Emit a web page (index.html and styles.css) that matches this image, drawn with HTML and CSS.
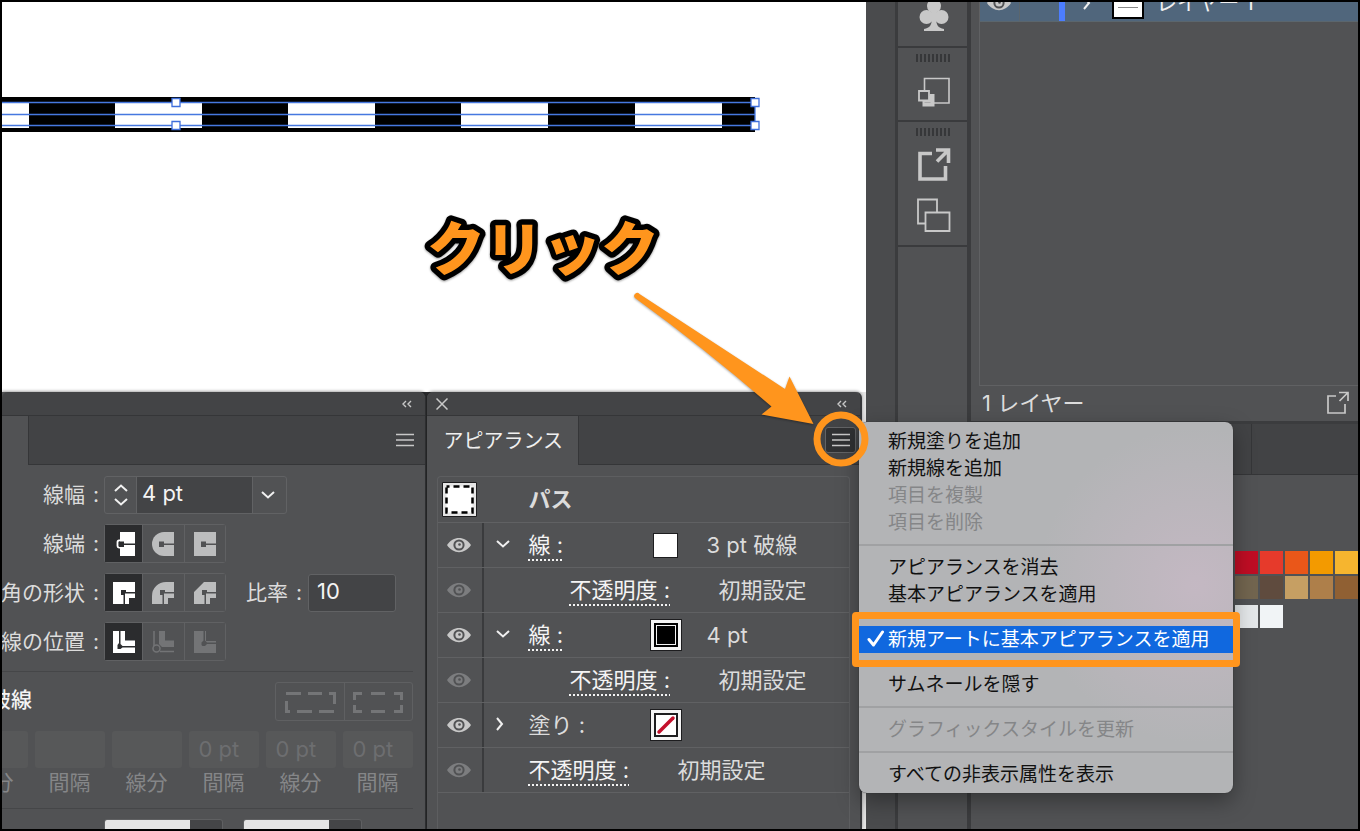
FILE: index.html
```html
<!DOCTYPE html>
<html lang="ja">
<head>
<meta charset="utf-8">
<title>アピアランス</title>
<link rel="stylesheet" href="styles.css">
</head>
<body>
<svg class="defs" aria-hidden="true">
  <symbol id="eye" viewBox="0 0 24 16"><path d="M0 8C6-1.500 18-1.500 24 8C18 17.500 6 17.500 0 8Z" fill="currentColor"/><circle cx="12" cy="8" r="5.600" fill="#515254"/><circle cx="12" cy="8" r="3.600" fill="currentColor"/><circle cx="12.500" cy="7.500" r="1.300" fill="#515254"/></symbol>
  <symbol id="down" viewBox="0 0 14 8"><path d="M1 1L7 6.500L13 1" fill="none" stroke="currentColor" stroke-width="2"/></symbol>
  <symbol id="up" viewBox="0 0 14 8"><path d="M1 7L7 1.500L13 7" fill="none" stroke="currentColor" stroke-width="2"/></symbol>
  <symbol id="right" viewBox="0 0 8 14"><path d="M1 1L6 7L1 13" fill="none" stroke="currentColor" stroke-width="2"/></symbol>
  <symbol id="collapse" viewBox="0 0 12 8"><path d="M5 1L2 4L5 7M10 1L7 4L10 7" fill="none" stroke="currentColor" stroke-width="1.400"/></symbol>
  <symbol id="burger" viewBox="0 0 20 14"><path d="M1 1.500H19M1 7H19M1 12.500H19" stroke="currentColor" stroke-width="1.600"/></symbol>
  <symbol id="export" viewBox="0 0 34 34"><path d="M15 5.500H3V31H28.500V18" fill="none" stroke="currentColor" stroke-width="3.600"/><path d="M19 2H31.500V15M31 2.500L20 13.500" fill="none" stroke="currentColor" stroke-width="3.600"/></symbol>
</svg>
<div class="frame">
  <main class="workspace">
    <section class="artboard">
      <svg class="artwork" viewBox="2 90 762 50" width="762" height="50" aria-label="破線パス">
        <rect x="2" y="97" width="753" height="35"/>
        <path fill="#fff" d="M2 102H29V128H2ZM115 102H202V128H115ZM288 102H375V128H288ZM461 102H548V128H461ZM635 102H722V128H635Z"/>
        <path d="M2 102.500H755M2 114.500H755M2 125.500H755M755 102V126" fill="none" stroke="#4678e0" stroke-width="1.300"/>
        <path d="M172 98.500h8v8h-8ZM172 121.500h8v8h-8ZM751 98.500h8v8h-8ZM751 121.500h8v8h-8Z" fill="#fff" stroke="#3f6fdc" stroke-width="1.300"/>
      </svg>
    </section>
    <div class="panels">
      <section class="panel stroke-panel">
        <header class="panel-bar"><button class="icon-button collapse" aria-label="折りたたむ"><svg width="12" height="8"><use href="#collapse"/></svg></button></header>
        <div class="tabs">
          <span class="tab tab-edge"></span>
          <button class="icon-button menu-button" aria-label="線メニュー"><svg width="20" height="14"><use href="#burger"/></svg></button>
        </div>
        <div class="stroke-body">
          <div class="field-row">
            <label class="field-label" for="weight">線幅<span>:</span></label>
            <div class="combo">
              <div class="stepper">
                <button class="icon-button" aria-label="増やす"><svg width="14" height="8"><use href="#up"/></svg></button>
                <button class="icon-button" aria-label="減らす"><svg width="14" height="8"><use href="#down"/></svg></button>
              </div>
              <input id="weight" class="text-input" value="4 pt">
              <button class="icon-button combo-open" aria-label="線幅の候補"><svg width="14" height="8"><use href="#down"/></svg></button>
            </div>
          </div>
          <div class="field-row">
            <span class="field-label">線端<span>:</span></span>
            <div class="segment" role="group" aria-label="線端">
              <button class="seg on" aria-label="線端なし"><svg width="22" height="24" viewBox="0 0 22 24"><path d="M7 0H22V24H7Z" fill="currentColor"/><path d="M9 8.500H6Q4.500 8.500 4.500 10V14Q4.500 15.500 6 15.500H9" fill="none" stroke="currentColor" stroke-width="1.800"/><path d="M6 9.500h5v2h11v1.500h-11v2h-5Z" class="cut"/></svg></button>
              <button class="seg" aria-label="丸型線端"><svg width="22" height="24" viewBox="0 0 22 24"><path d="M22 0H12A12 12 0 0 0 12 24H22Z" fill="currentColor"/><path d="M7 9.500h5v2h10v1.500h-10v2h-5Z" class="cut"/></svg></button>
              <button class="seg" aria-label="突出線端"><svg width="22" height="24" viewBox="0 0 22 24"><path d="M0 0H22V24H0Z" fill="currentColor"/><path d="M7 9.500h5v2h10v1.500h-10v2h-5Z" class="cut"/></svg></button>
            </div>
          </div>
          <div class="field-row">
            <span class="field-label">角の形状<span>:</span></span>
            <div class="segment" role="group" aria-label="角の形状">
              <button class="seg on" aria-label="マイター結合"><svg width="22" height="22" viewBox="0 0 22 22"><path d="M0 0H22V16H16V22H0Z" fill="currentColor"/><path d="M8 8h5v2h9v1.500h-10v10.500h-1.500v-9h-2.500Z" class="cut"/></svg></button>
              <button class="seg" aria-label="ラウンド結合"><svg width="22" height="22" viewBox="0 0 22 22"><path d="M22 0H14A14 14 0 0 0 0 14V22H16V16H22Z" fill="currentColor"/><path d="M8 8h5v2h9v1.500h-10v10.500h-1.500v-9h-2.500Z" class="cut"/></svg></button>
              <button class="seg" aria-label="ベベル結合"><svg width="22" height="22" viewBox="0 0 22 22"><path d="M10 0H22V16H16V22H0V10Z" fill="currentColor"/><path d="M8 8h5v2h9v1.500h-10v10.500h-1.500v-9h-2.500Z" class="cut"/></svg></button>
            </div>
            <label class="ratio-label" for="ratio">比率<span>:</span></label>
            <input id="ratio" class="text-input ratio-input" value="10">
          </div>
          <div class="field-row">
            <span class="field-label">線の位置<span>:</span></span>
            <div class="segment" role="group" aria-label="線の位置">
              <button class="seg on" aria-label="中央"><svg width="22" height="22" viewBox="0 0 22 22"><path d="M0 0H12V9.500H22V22H0Z" fill="currentColor"/><path d="M6 0h1.500v13l2 2h12.500v1.500h-12.500l-2 1.500h-3v-4l1.500-2Z" class="cut"/></svg></button>
              <button class="seg off" aria-label="内側" disabled><svg width="22" height="22" viewBox="0 0 22 22"><path d="M7 0H13V9.500H22V16H10L7 13Z" fill="currentColor"/><path d="M2 0V15M8 20.500H22" stroke="currentColor" stroke-width="1.500"/><circle cx="4.500" cy="17.500" r="3.500" fill="none" stroke="currentColor" stroke-width="1.500"/></svg></button>
              <button class="seg off" aria-label="外側" disabled><svg width="22" height="22" viewBox="0 0 22 22"><path d="M0 0H12V10H22V22H0Z" fill="currentColor"/><path d="M9.500 0h1.500v9.500l2 2h9v1.500h-9l-2 2h-2.500l-1-1v-2.500l2-2Z" class="cut"/></svg></button>
            </div>
          </div>
          <hr class="rule">
          <div class="dash-head">
            <span class="dash-title">破線</span>
            <div class="dash-modes">
              <button class="dash-mode" aria-label="正確な長さ" disabled><svg width="52" height="24" viewBox="0 0 52 24"><path d="M2 3.500H17M24 3.500H38M45 3.500H50.500V14M2.500 11V21.500H6M13 21.500H28M35 21.500H50" fill="none" stroke="currentColor" stroke-width="3"/></svg></button>
              <button class="dash-mode" aria-label="コーナーに整列" disabled><svg width="52" height="24" viewBox="0 0 52 24"><path d="M10 3.500H2.500V10M19 3.500H33M42 3.500H49.500V10M2.500 15V21.500H10M19 21.500H33M42 21.500H49.500V15" fill="none" stroke="currentColor" stroke-width="3"/></svg></button>
            </div>
          </div>
          <div class="dashes">
            <label class="dash"><input class="dash-input" disabled value="">線分</label>
            <label class="dash"><input class="dash-input" disabled value="">間隔</label>
            <label class="dash"><input class="dash-input" disabled value="">線分</label>
            <label class="dash"><input class="dash-input" disabled value="0 pt">間隔</label>
            <label class="dash"><input class="dash-input" disabled value="0 pt">線分</label>
            <label class="dash"><input class="dash-input" disabled value="0 pt">間隔</label>
          </div>
          <hr class="rule">
          <div class="arrowheads">
            <button class="arrowhead" aria-label="始点の矢印"></button>
            <button class="arrowhead" aria-label="終点の矢印"></button>
          </div>
        </div>
      </section>

      <section class="panel appearance-panel">
        <header class="panel-bar">
          <button class="icon-button close" aria-label="閉じる"><svg width="12" height="12" viewBox="0 0 12 12"><path d="M0.500 0.500L11.500 11.500M11.500 0.500L0.500 11.500" stroke="currentColor" stroke-width="1.500"/></svg></button>
          <button class="icon-button collapse" aria-label="折りたたむ"><svg width="12" height="8"><use href="#collapse"/></svg></button>
        </header>
        <div class="tabs">
          <span class="tab tab-name">アピアランス</span>
          <button class="icon-button menu-button pressed" aria-label="アピアランスメニュー"><svg width="20" height="14"><use href="#burger"/></svg></button>
        </div>
        <div class="attributes">
          <div class="attr-head">
            <svg class="thumb" width="35" height="35" viewBox="0 0 35 35"><path d="M.5.500H34.500V34.500H.5Z" fill="#e6e6e6" stroke="#1d1d1f"/><rect x="4.500" y="4.500" width="26" height="26" fill="#fff" stroke="#000" stroke-width="2.500" stroke-dasharray="6 4" stroke-dashoffset="3"/></svg>
            <strong class="attr-title">パス</strong>
          </div>
          <div class="attr">
            <button class="icon-button eye" aria-label="表示"><svg width="24" height="16"><use href="#eye"/></svg></button>
            <button class="icon-button twist" aria-label="閉じる"><svg width="14" height="8"><use href="#down"/></svg></button>
            <span class="attr-name"><a class="attr-link" href="#">線 :</a></span>
            <span class="swatch-slot"><span class="chip"></span></span>
            <span class="attr-value">3 pt 破線</span>
          </div>
          <div class="attr">
            <button class="icon-button eye dim" aria-label="表示"><svg width="24" height="16"><use href="#eye"/></svg></button>
            <span class="opacity nested"><a class="attr-link" href="#">不透明度 :</a></span>
            <span class="attr-text">初期設定</span>
          </div>
          <div class="attr">
            <button class="icon-button eye" aria-label="表示"><svg width="24" height="16"><use href="#eye"/></svg></button>
            <button class="icon-button twist" aria-label="閉じる"><svg width="14" height="8"><use href="#down"/></svg></button>
            <span class="attr-name"><a class="attr-link" href="#">線 :</a></span>
            <span class="swatch-slot"><span class="chip framed black"></span></span>
            <span class="attr-value">4 pt</span>
          </div>
          <div class="attr">
            <button class="icon-button eye dim" aria-label="表示"><svg width="24" height="16"><use href="#eye"/></svg></button>
            <span class="opacity nested"><a class="attr-link" href="#">不透明度 :</a></span>
            <span class="attr-text">初期設定</span>
          </div>
          <div class="attr">
            <button class="icon-button eye" aria-label="表示"><svg width="24" height="16"><use href="#eye"/></svg></button>
            <button class="icon-button twist twist-closed" aria-label="開く"><svg width="8" height="14"><use href="#right"/></svg></button>
            <span class="attr-name">塗り :</span>
            <span class="swatch-slot"><span class="chip framed"><svg width="20" height="20" viewBox="0 0 20 20"><path d="M3 17L17 3" stroke="#c4102c" stroke-width="3.500" stroke-linecap="round"/></svg></span></span>
          </div>
          <div class="attr">
            <button class="icon-button eye dim" aria-label="表示"><svg width="24" height="16"><use href="#eye"/></svg></button>
            <span class="opacity"><a class="attr-link" href="#">不透明度 :</a></span>
            <span class="attr-text">初期設定</span>
          </div>
        </div>
        <div class="menu" role="menu">
          <button class="item" role="menuitem">新規塗りを追加</button>
          <button class="item" role="menuitem">新規線を追加</button>
          <button class="item" role="menuitem" disabled>項目を複製</button>
          <button class="item" role="menuitem" disabled>項目を削除</button>
          <hr class="menu-rule">
          <button class="item" role="menuitem">アピアランスを消去</button>
          <button class="item" role="menuitem">基本アピアランスを適用</button>
          <hr class="menu-rule">
          <button class="item current" role="menuitemcheckbox" aria-checked="true"><svg class="check" width="18" height="18" viewBox="0 0 18 18"><path d="M2 9.500L6.500 15L15.500 2" fill="none" stroke="#fff" stroke-width="3" stroke-linecap="round" stroke-linejoin="round"/></svg>新規アートに基本アピアランスを適用</button>
          <hr class="menu-rule">
          <button class="item" role="menuitem">サムネールを隠す</button>
          <hr class="menu-rule">
          <button class="item" role="menuitem" disabled>グラフィックスタイルを更新</button>
          <hr class="menu-rule">
          <button class="item" role="menuitem">すべての非表示属性を表示</button>
        </div>
      </section>
    </div>
    <svg class="callout" width="464" height="300" viewBox="402 190 464 300">
      <text class="callout-text" x="427" y="270">クリック</text>
      <path class="callout-arrow" d="M639.500 294L785 389L789.500 376.500L813.500 424L761.500 414.500L771.500 406.500Q704 348 635 298A3 3 0 0 1 639.500 294Z"/>
      <circle class="callout-ring" cx="841" cy="439" r="24"/>
    </svg>
  </main>

  <div class="gutter"></div>

  <nav class="dock">
    <div class="dock-group dock-first">
      <button class="icon-button" aria-label="シンボル"><svg width="30" height="36" viewBox="0 0 30 36"><g fill="currentColor"><circle cx="15" cy="9" r="7"/><circle cx="7.500" cy="20" r="7"/><circle cx="22.500" cy="20" r="7"/><path d="M12 14H18L17 22C17.500 28 19 31 25 32V34H5V32C11 31 12.500 28 13 22Z"/></g></svg></button>
    </div>
    <div class="dock-group dock-transform">
      <span class="grip"></span>
      <button class="icon-button" aria-label="変形"><svg width="32" height="30" viewBox="0 0 32 30" fill="none" stroke="currentColor"><path d="M6.500 14V1.500H31V26H16" stroke-width="1.600"/><path d="M1 14H11V23.500H1Z" stroke-width="1.800"/><path d="M5.500 24V28.500H15.500V18H11.500M12 19V24.500H6" stroke-width="2"/><path d="M13.800 18V26.800H6" stroke-width="2.500"/></svg></button>
    </div>
    <div class="dock-group dock-assets">
      <span class="grip"></span>
      <button class="icon-button" aria-label="アセットの書き出し"><svg width="34" height="34"><use href="#export"/></svg></button>
      <button class="icon-button dock-next" aria-label="アートボード"><svg width="34" height="34" viewBox="0 0 34 34" fill="none" stroke="currentColor" stroke-width="1.800"><path d="M9 25.500H1V1.500H20V14"/><path d="M8.500 14.500H32.500V33H8.500Z"/></svg></button>
    </div>
  </nav>

  <aside class="sidebar">
    <section class="layers">
      <div class="layer-list">
        <div class="layer-clip">
          <div class="layer">
            <span class="layer-eye"><svg width="24" height="16"><use href="#eye"/></svg></span>
            <span class="layer-lock"></span>
            <span class="layer-color"></span>
            <svg class="layer-twist" width="8" height="14"><use href="#right"/></svg>
            <span class="layer-thumb"></span>
            <span class="layer-name">レイヤー 1</span>
          </div>
        </div>
      </div>
      <footer class="layers-foot">
        <span class="layer-count">1 レイヤー</span>
        <button class="icon-button" aria-label="書き出し"><svg width="24" height="24" viewBox="0 0 24 24" fill="none" stroke="currentColor" stroke-width="1.700"><path d="M10 5H2V22H19V13M13 1.500H22V10M22 1.500L13.500 10"/></svg></button>
      </footer>
    </section>
    <section class="swatches">
      <div class="swatch-tabs"><span class="swatch-tab"></span></div>
      <div class="swatch-grid">
        <span class="color c1"></span><span class="color c2"></span><span class="color c3"></span><span class="color c4"></span><span class="color c5"></span>
        <span class="color c6"></span><span class="color c7"></span><span class="color c8"></span><span class="color c9"></span><span class="color c10"></span>
      </div>
      <div class="swatch-grid swatch-grays"><span class="color c11"></span><span class="color c12"></span></div>
    </section>
  </aside>
</div>
</body>
</html>
```
FILE: styles.css
```css
* { box-sizing: border-box; }

body {
  margin: 0;
  font-family: Inter, "Noto Sans CJK JP", sans-serif;
  font-size: 21px;
  line-height: 30px;
  color: #dcdcdc;
  background: #000;
}

button, input { font: inherit; color: inherit; }
svg { display: block; flex: none; }
hr { margin: 0; border: 0; }

.defs { position: absolute; width: 0; height: 0; }

.icon-button {
  display: flex;
  align-items: center;
  justify-content: center;
  padding: 0;
  border: 0;
  background: none;
  color: #c8c8c8;
}

.frame {
  display: flex;
  height: 100vh;
  border: 2px solid #000;
  overflow: hidden;
  background: #515254;
}

/* Canvas and floating panels */
.workspace {
  position: relative;
  z-index: 1;
  flex: 1;
  min-width: 0;
  display: flex;
  flex-direction: column;
  background: #fff;
}

.artboard { flex: none; height: 390px; padding-top: 88px; }

.panels { flex: 1; min-height: 0; display: flex; gap: 1px; padding-right: 4px; background: linear-gradient(90deg, #2e2f31 97%, #e4e4e4 97%); }

.panel {
  display: flex;
  flex-direction: column;
  min-width: 0;
  background: #515254;
  box-shadow: 0 -1px 3px rgba(0, 0, 0, .35);
}

.stroke-panel { flex: 424 1 0; overflow: hidden; border-right: 1px solid #303133; border-top-right-radius: 6px; }
.appearance-panel { position: relative; flex: 435 1 0; border-radius: 6px 6px 0 0; border-right: 2px solid #36373a; }

.panel-bar {
  flex: none;
  display: flex;
  align-items: center;
  height: 24px;
  padding: 0 12px 0 9px;
  border-bottom: 1px solid #353638;
  background: #434446;
  border-radius: 6px 6px 0 0;
}
.collapse { margin-left: auto; }

.tabs {
  flex: none;
  display: flex;
  align-items: center;
  height: 49px;
  background: #424345;
  border-bottom: 1px solid #353638;
}
.tab { align-self: stretch; margin-bottom: -1px; background: #515254; border-right: 1px solid #353638; }
.tab-edge { width: 27px; }
.tab-name { padding: 10px 15px 0 17px; font-size: 20px; color: #f0f0f0; }
.menu-button { margin-left: auto; margin-right: 9px; width: 22px; height: 26px; }
.menu-button.pressed { width: 31px; margin-right: 4px; background: #303133; border: 1px solid #626365; border-radius: 3px; }

/* Stroke options */
.stroke-body { display: flex; flex-direction: column; gap: 10px; padding: 11px 12px 0 0; }
.field-row { display: flex; align-items: center; height: 38px; }
.field-row + .field-row { height: 39px; }
.field-label { flex: none; display: flex; justify-content: flex-end; gap: 8px; width: 97px; margin-right: 5px; white-space: nowrap; }

.combo { display: flex; width: 183px; height: 38px; border: 1px solid #616264; border-radius: 3px; }
.stepper { display: flex; flex-direction: column; justify-content: space-evenly; width: 31px; align-items: center; }
.stepper .icon-button, .combo-open { color: #f0f0f0; }
.combo-open { width: 33px; padding-right: 3px; }

.text-input {
  min-width: 0;
  padding: 0 5px 4px;
  border: 1px solid #616264;
  background: #434446;
  color: #f4f4f4;
  font-size: 22px;
}
.combo .text-input { flex: 1; border-width: 0 1px; }
.ratio-label { display: flex; gap: 8px; margin: 0 6px 0 20px; white-space: nowrap; }
.ratio-input { width: 88px; height: 38px; padding-left: 8px; border-radius: 3px; }

.segment { display: flex; width: 122px; height: 39px; border: 1px solid #606163; border-radius: 3px; }
.seg {
  flex: 1;
  display: flex;
  align-items: center;
  justify-content: center;
  padding: 0;
  border: 0;
  background: #515254;
  color: #bcbdbe;
}
.seg + .seg { border-left: 1px solid #606163; }
.seg.on { flex: none; width: 37px; background: #2b2c2e; color: #fff; }
.seg.off { color: #737476; }
.cut { fill: #515254; }
.on .cut { fill: #2b2c2e; }

.rule { height: 1px; background: #454648; }
.dash-head { display: flex; align-items: center; justify-content: space-between; height: 39px; }
.dash-title { display: flex; justify-content: flex-end; width: 30px; padding-bottom: 3px; overflow: hidden; white-space: nowrap; font-weight: 500; color: #f4f4f4; }
.dash-modes { display: flex; border: 1px solid #5f6062; border-radius: 3px; }
.dash-mode { display: flex; align-items: center; justify-content: center; width: 68px; height: 37px; padding: 0; border: 0; background: none; color: #747577; }
.dash-mode + .dash-mode { border-left: 1px solid #5f6062; }

.dashes { display: flex; justify-content: flex-end; gap: 7px; overflow: hidden; }
.dash { flex: none; display: flex; flex-direction: column; align-items: center; width: 70px; color: #858688; }
.dash-input { width: 100%; height: 37px; padding: 0 10px 2px; border: 0; border-radius: 3px; background: #575859; color: #6d6e70; font-size: 22px; }

.arrowheads { display: flex; gap: 20px; padding-left: 102px; }
.arrowhead { width: 119px; height: 38px; padding: 0; border: 1px solid #5f6062; border-radius: 3px; background: linear-gradient(90deg, #e4e4e4 85px, #444547 85px); }

/* Appearance attributes */
.attributes { flex: 1; margin: 11px 10px 0; border: 1px solid #5d5e60; border-bottom: 0; border-radius: 4px 4px 0 0; font-size: 22px; }
.attr-head { display: flex; align-items: center; height: 46px; padding-left: 4px; border-bottom: 1px solid #606163; }
.attr-title { margin-left: 52px; padding-bottom: 2px; font-weight: 700; }
.attr { display: flex; align-items: center; height: 45px; border-bottom: 1px solid #606163; }
.eye { align-self: stretch; width: 46px; padding-right: 2px; border-right: 2px solid #3a3b3d; }
.eye.dim { color: #7c7d7f; }
.twist { width: 45px; padding: 0 6px 2px 0; color: #f0f0f0; }
.twist-closed { padding-right: 12px; }
.attr-name { width: 121px; }
.attr-link { color: #f4f4f4; text-decoration: underline dotted 2px; text-underline-offset: 6px; }
.swatch-slot { display: flex; justify-content: center; width: 32px; margin-right: 25px; }
.chip { display: block; width: 25px; height: 25px; border: 1px solid #1d1d1f; background: #fff; }
.chip.framed { width: 24px; height: 24px; border-width: 2px; box-shadow: 0 0 0 3px #f4f4f4, 0 0 0 4px #1d1d1f; }
.chip.black { background: #000; border: 1px solid #000; outline: 1px solid #f4f4f4; outline-offset: -3px; }
.opacity { width: 194px; padding-left: 45px; white-space: nowrap; }
.opacity.nested { width: 235px; padding-left: 86px; }

/* Panel menu */
.menu {
  position: absolute;
  top: 30px;
  left: calc(100% - 1px);
  width: 374px;
  padding: 6px 0 5px;
  border-radius: 8px;
  background: radial-gradient(circle at 90% 44%, rgba(203, 186, 200, .7), rgba(190, 182, 186, 0) 40%), #b3b4b6;
  box-shadow: 0 0 1px #222, 0 8px 22px rgba(0, 0, 0, .35);
}
.item {
  position: relative;
  display: block;
  width: 100%;
  height: 27px;
  padding: 0 0 0 29px;
  border: 0;
  background: none;
  color: #111;
  font-size: 19px;
  line-height: 27px;
  text-align: left;
  white-space: nowrap;
}
.item:disabled { color: #858688; }
.item.current { background: #1068df; color: #fff; }
.item.current::after { content: ""; position: absolute; inset: -14px -7px; border: 7px solid #ff951d; border-radius: 4px; }
.check { position: absolute; left: 8px; top: 4px; }
.menu-rule { height: 18px; background: linear-gradient(#a0a1a3, #a0a1a3) center / 100% 2px no-repeat; }

/* Callout drawn over the panels */
.callout { position: absolute; right: 0; top: 188px; overflow: visible; pointer-events: none; }
.callout-text { font-size: 58px; font-weight: 900; fill: #ff951d; stroke: #000; stroke-width: 11px; stroke-linejoin: round; paint-order: stroke; filter: drop-shadow(0 1px 1px rgba(0, 0, 0, .4)); }
.callout-arrow { fill: #ff951d; filter: drop-shadow(0 1px 1px rgba(0, 0, 0, .35)); }
.callout-ring { fill: none; stroke: #ff951d; stroke-width: 7px; }

/* Icon dock */
.gutter { flex: none; width: 32px; background: #4a4b4d; border-right: 3px solid #3b3c3e; }
.dock { flex: none; width: 73px; border-right: 4px solid #3b3c3e; }
.dock-group { display: flex; flex-direction: column; align-items: center; padding: 0 0 13px 2px; border-bottom: 2px solid #3a3b3d; }
.dock-first { height: 46px; justify-content: flex-end; }
.dock-transform { height: 74px; }
.grip { width: 35px; height: 8px; margin: 6px 0 15px; background: repeating-linear-gradient(90deg, #363739 0 2px, #515254 2px 4px); }
.dock-assets .grip { margin-bottom: 12px; }
.dock-next { margin-top: 16px; }

/* Layers and swatches */
.sidebar { flex: none; display: flex; flex-direction: column; width: 387px; }
.layers { height: 422px; border-bottom: 3px solid #3b3c3e; }
.layer-list { height: 384px; margin-left: 8px; border-left: 1px solid #606163; border-bottom: 1px solid #606163; }
.layer-clip { display: flex; align-items: flex-end; height: 20px; overflow: hidden; border-bottom: 1px solid #5b666d; }
.layer { flex: 1; display: flex; align-items: center; height: 36px; background: #50667c; color: #f0f0f0; }
.layer-eye { width: 39px; padding-left: 7px; color: #c8c8c8; }
.layer-lock { width: 40px; align-self: stretch; border-left: 1px solid #5b666d; }
.layer-color { width: 6px; align-self: stretch; background: #4c7dff; }
.layer-twist { margin-left: 18px; }
.layer-thumb { width: 32px; height: 32px; margin: 0 12px 0 21px; border: 2px solid #000; background: linear-gradient(#888, #888) center 65% / 20px 1px no-repeat #fff; }
.layers-foot { display: flex; align-items: center; justify-content: space-between; height: 34px; padding: 0 8px 0 11px; }
.layer-count { font-size: 22px; }

.swatches { flex: 1; }
.swatch-tabs { height: 51px; background: #424345; border-bottom: 1px solid #353638; }
.swatch-tab { display: block; width: 281px; height: 100%; border-right: 1px solid #353638; }
.swatch-grid { display: grid; grid-template-columns: repeat(5, 23px); gap: 2px; justify-content: end; margin-top: 76px; }
.swatch-grid.swatch-grays { margin-top: 6px; }
.color { height: 23px; }
.c1 { background: #bf0d24; } .c2 { background: #e63a2b; } .c3 { background: #ea5719; } .c4 { background: #f39a00; } .c5 { background: #f6b52f; }
.c6 { background: #72654f; } .c7 { background: #5f4b3e; } .c8 { background: #c69f63; } .c9 { background: #ae7f4a; } .c10 { background: #906033; }
.c11 { background: #e4e7e9; } .c12 { background: #f1f4f6; }
```
